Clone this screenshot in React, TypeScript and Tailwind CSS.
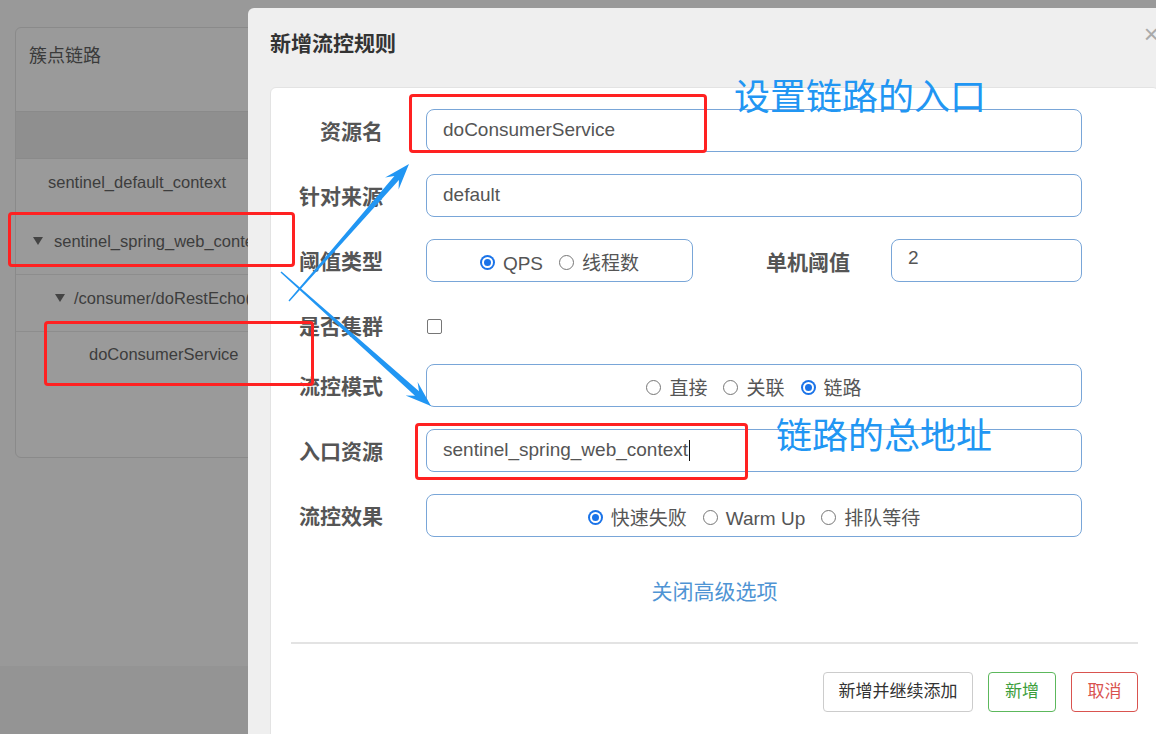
import React from "react";

const FONT = "font-[family-name:'Liberation_Sans','Noto_Sans_CJK_SC',sans-serif]";

// tapered annotation arrow, thin at the tail and thick near the head
function arrowPoints(x1: number, y1: number, x2: number, y2: number) {
  const len = Math.hypot(x2 - x1, y2 - y1);
  const dx = (x2 - x1) / len;
  const dy = (y2 - y1) / len;
  const nx = -dy;
  const ny = dx;
  const headLen = 26;
  const headW = 9;
  const tailW = 0.7;
  const shaftW = 3;
  const hb = { x: x2 - dx * headLen, y: y2 - dy * headLen };
  const notch = { x: x2 - dx * headLen * 0.72, y: y2 - dy * headLen * 0.72 };
  const pts = [
    [x1 + nx * tailW, y1 + ny * tailW],
    [notch.x + nx * shaftW, notch.y + ny * shaftW],
    [hb.x + nx * headW, hb.y + ny * headW],
    [x2, y2],
    [hb.x - nx * headW, hb.y - ny * headW],
    [notch.x - nx * shaftW, notch.y - ny * shaftW],
    [x1 - nx * tailW, y1 - ny * tailW],
  ];
  return pts.map((p) => `${p[0].toFixed(1)},${p[1].toFixed(1)}`).join(" ");
}

function Radio({ checked, label }: { checked?: boolean; label: string }) {
  return (
    <span className="flex items-center gap-[8px]">
      {checked ? (
        <span className="-mt-[3px] flex h-[15px] w-[15px] items-center justify-center rounded-full bg-[#1a73e8]">
          <span className="h-[11px] w-[11px] rounded-full border-[2px] border-white bg-[#1a73e8]" />
        </span>
      ) : (
        <span className="-mt-[3px] h-[15px] w-[15px] rounded-full border border-[#767676] bg-white" />
      )}
      <span>{label}</span>
    </span>
  );
}

function Row({ label, children, className = "" }: { label: string; children: React.ReactNode; className?: string }) {
  return (
    <div className={`flex items-center ${className}`}>
      <div className="w-[92px] whitespace-nowrap pt-[2px] text-right text-[21px] font-bold leading-[28px] text-[#555]">{label}</div>
      <div className="ml-[43px] w-[656px]">{children}</div>
    </div>
  );
}

const boxCls = "flex h-[43px] items-center rounded-[8px] border border-[#79a6d8] bg-white text-[19px] text-[#555]";

function Triangle() {
  return (
    <svg width="10" height="8" viewBox="0 0 10 8" className="shrink-0">
      <path d="M0 0 L10 0 L5 8 Z" fill="#444" />
    </svg>
  );
}

export default function App() {
  return (
    <div className={`relative h-[734px] w-[1156px] overflow-hidden bg-[#999] ${FONT}`}>
      {/* page behind the modal */}
      <div className="flex h-full flex-col">
        <div className="h-[666px] pl-[15px] pt-[27px]">
          <div className="w-[420px] h-[431px] rounded-[6px] border border-[#8a8a8a] bg-[#9a9a9a]">
            <div className="h-[84px] border-b border-[#8a8a8a] pl-[13px] pt-[16px] text-[18px] leading-[24px] text-[#3a3a3a]">簇点链路</div>
            <div className="h-[47px] border-b border-[#8a8a8a] bg-[#8f8f8f]" />
            <div className="flex h-[54px] items-center border-b border-[#8d8d8d] pb-[6px] pl-[32px] text-[16.5px] text-[#3d3d3d]">
              sentinel_default_context
            </div>
            <div className="flex h-[62px] items-center gap-[11px] border-b border-[#8d8d8d] pb-[5px] pl-[17px] text-[16.5px] text-[#3d3d3d]">
              <Triangle />
              <span className="whitespace-nowrap">sentinel_spring_web_context</span>
            </div>
            <div className="flex h-[57px] items-center gap-[9px] border-b border-[#8d8d8d] pb-[10px] pl-[39px] text-[16.5px] text-[#3d3d3d]">
              <Triangle />
              <span className="whitespace-nowrap">/consumer/doRestEcho(String)</span>
            </div>
            <div className="flex h-[44px] items-center pl-[73px] text-[16.5px] text-[#3d3d3d]">doConsumerService</div>
          </div>
        </div>
        <div className="flex-1 bg-[#949494]" />
      </div>

      {/* modal */}
      <div className="absolute left-[248px] top-[8px] h-[760px] w-[933px] rounded-tl-[6px] bg-[#efefef] px-[22px]">
        <div className="flex items-center justify-between pt-[22px]">
          <div className="text-[21px] font-semibold leading-[28px] text-[#333]">新增流控规则</div>
          <div className="-mt-[20px] text-[26px] leading-none text-[#aaa]">×</div>
        </div>
        <div className="mt-[29px] h-[700px] rounded-[6px] border border-[#e3e3e3] bg-white px-[20px] pt-[21px]">
          <Row label="资源名">
            <div className={`${boxCls} pl-[16px]`}>doConsumerService</div>
          </Row>
          <Row label="针对来源" className="mt-[22px]">
            <div className={`${boxCls} pl-[16px]`}>default</div>
          </Row>
          <Row label="阈值类型" className="mt-[22px]">
            <div className="flex items-center">
              <div className={`${boxCls} w-[267px] justify-center gap-[16px] pt-[7px]`}>
                <Radio checked label="QPS" />
                <Radio label="线程数" />
              </div>
              <div className="flex-1 pt-[4px] text-right text-[21px] font-bold text-[#555]">单机阈值</div>
              <div className={`${boxCls} ml-[41px] w-[191px] pb-[4px] pl-[16px]`}>2</div>
            </div>
          </Row>
          <Row label="是否集群" className="mt-[22px] h-[44px]">
            <div className="ml-[1px] h-[15px] w-[15px] rounded-[2px] border border-[#767676] bg-white" />
          </Row>
          <Row label="流控模式" className="mt-[16px]">
            <div className={`${boxCls} justify-center gap-[16px] pt-[7px]`}>
              <Radio label="直接" />
              <Radio label="关联" />
              <Radio checked label="链路" />
            </div>
          </Row>
          <Row label="入口资源" className="mt-[22px]">
            <div className={`${boxCls} pl-[16px]`}>
              <span>sentinel_spring_web_context</span>
              <span className="ml-[1px] h-[21px] w-[1px] bg-[#111]" />
            </div>
          </Row>
          <Row label="流控效果" className="mt-[22px]">
            <div className={`${boxCls} justify-center gap-[16px] pt-[7px]`}>
              <Radio checked label="快速失败" />
              <Radio label="Warm Up" />
              <Radio label="排队等待" />
            </div>
          </Row>
          <div className="mt-[41px] text-center text-[21px] leading-[28px] text-[#4f94d4]">关闭高级选项</div>
          <div className="mt-[36px] border-t-2 border-[#e3e3e3]" />
          <div className="mt-[28px] flex justify-end gap-[15px] text-[17px]">
            <div className="flex h-[40px] w-[150px] items-center justify-center rounded-[4px] border border-[#ccc] text-[#333]">新增并继续添加</div>
            <div className="flex h-[40px] w-[68px] items-center justify-center rounded-[4px] border border-[#5cb85c] text-[#3c9e3c]">新增</div>
            <div className="flex h-[40px] w-[67px] items-center justify-center rounded-[4px] border border-[#d9534f] text-[#d9534f]">取消</div>
          </div>
        </div>
      </div>

      {/* screenshot annotations */}
      <div className="absolute left-[409px] top-[94px] h-[59px] w-[298px] rounded-[4px] border-[3px] border-[#ff2121]" />
      <div className="absolute left-[415px] top-[423px] h-[57px] w-[333px] rounded-[4px] border-[3px] border-[#ff2121]" />
      <div className="absolute left-[8px] top-[212px] h-[55px] w-[287px] rounded-[4px] border-[3px] border-[#ff2121]" />
      <div className="absolute left-[44px] top-[321px] h-[65px] w-[270px] rounded-[4px] border-[3px] border-[#ff2121]" />
      <div className="absolute left-[734px] top-[80px] whitespace-nowrap text-[36px] leading-none text-[#2196f3]">设置链路的入口</div>
      <div className="absolute left-[776px] top-[419px] whitespace-nowrap text-[36px] leading-none text-[#2196f3]">链路的总地址</div>
      <svg className="pointer-events-none absolute left-0 top-0" width="1156" height="734">
        <polygon points={arrowPoints(289, 301, 409, 164)} fill="#2196f3" />
        <polygon points={arrowPoints(281, 272, 431, 406)} fill="#2196f3" />
      </svg>
    </div>
  );
}
